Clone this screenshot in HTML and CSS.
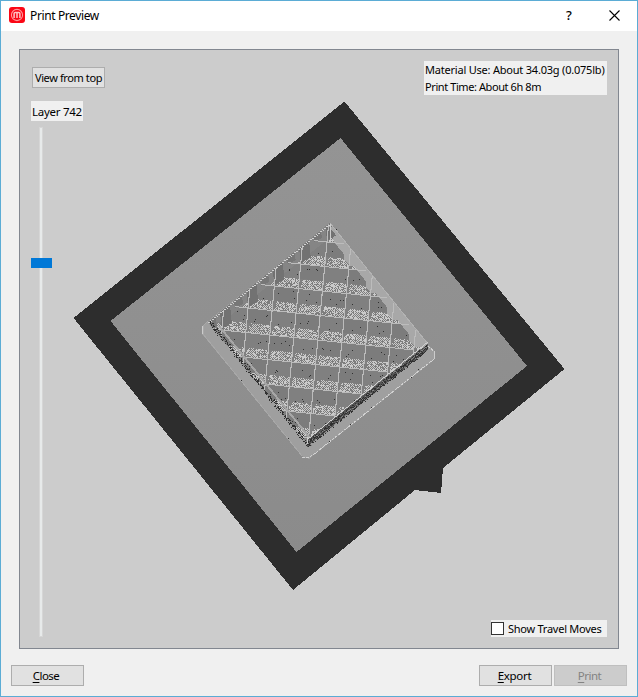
FILE: index.html
```html
<!DOCTYPE html>
<html lang="en">
<head>
<meta charset="utf-8">
<title>Print Preview</title>
<link rel="stylesheet" href="styles.css">
</head>
<body>
<div class="window">
  <header class="titlebar">
    <svg class="logo" width="16" height="16" viewBox="0 0 16 16"><rect width="16" height="16" rx="3" fill="#fb0715"/><circle cx="8" cy="8" r="5.6" fill="none" stroke="#ff9a9d" stroke-width="1.1"/><path d="M5.1 11V6.6Q5.1 5.5 6.2 5.5H9.8Q10.9 5.5 10.9 6.6V11M8 5.5V11" fill="none" stroke="#ffc4c5" stroke-width="1.5"/></svg>
    <h1 class="title">Print Preview</h1>
    <span class="help">?</span>
    <svg class="close-icon" width="11" height="11" viewBox="0 0 11 11"><path d="M.5.5l10 10M10.5.5l-10 10" stroke="#000" stroke-width="1.1"/></svg>
  </header>
  <main class="content">
    <section class="viewport">
      <svg class="scene" width="598" height="598" viewBox="20 50 598 598" shape-rendering="crispEdges">
        <defs>
          <linearGradient id="bed" x1="0" y1="0" x2="0" y2="1"><stop offset="0" stop-color="#949494"/><stop offset="1" stop-color="#8b8b8b"/></linearGradient>
          <clipPath id="pit"><path d="M330 223L428 344L307 443L208 322Z"/></clipPath>
        </defs>
        <path d="M344.500 101.500L564.500 369L443 468L441 493L415 490L293 590L73.500 318Z" fill="#2d2d2d"/>
        <path d="M340.500 138L527 366L296.500 552L110.500 321Z" fill="url(#bed)"/>
        <path d="M209 320L202 327V334L303 457L309 459L434 360L435 352L428 344L330 223Z" fill="#9f9f9f"/>
        <g id="cells" clip-path="url(#pit)"></g>
        <g id="edges"></g>
      </svg>
      <button class="button view-button">View from top</button>
      <div class="tag layer">Layer 742</div>
      <div class="slider"><div class="handle"></div></div>
      <div class="tag info"><div class="material">Material Use: About 34.03g (0.075lb)</div><div class="time">Print Time: About 6h 8m</div></div>
      <label class="tag travel"><span class="box"></span><span class="travel-text">Show Travel Moves</span></label>
    </section>
    <footer class="actions">
      <button class="button action"><span class="close-text"><u>C</u>lose</span></button>
      <button class="button action export"><span class="export-text"><u>E</u>xport</span></button>
      <button class="button action" disabled><span class="print-text"><u>P</u>rint</span></button>
    </footer>
  </main>
</div>
<script src="scene.js"></script>
</body>
</html>
```
FILE: styles.css
```css
* { box-sizing: border-box; }
body { margin: 0; color: #000; font: 11px/17px "Noto Sans", sans-serif; }
.window { width: 638px; height: 697px; border: 1px solid #5bacd5; background: #f0f0f0; display: flex; flex-direction: column; }
.titlebar { height: 30px; padding: 0 17px 0 8px; display: flex; align-items: center; background: #fff; }
.logo { margin-top: -2px; }
.title { flex: 1; margin: -1px 0 0 5px; font-size: 12px; font-weight: 400; letter-spacing: -.38px; }
.help { width: 7px; margin: -1px 36px 0 0; font-size: 13px; font-weight: 500; }
.close-icon { margin-top: -1px; }
.content { flex: 1; padding: 18px 10px 10px; display: flex; flex-direction: column; justify-content: space-between; }
.viewport { position: relative; width: 600px; height: 600px; margin-left: 8px; border: 1px solid #828790; background: #ccc; }
.scene { display: block; }
.button { font: inherit; font-size: 11.5px; line-height: 17px; height: 21px; padding: 0; border: 1px solid #adadad; background: #e1e1e1; color: #000; white-space: nowrap; letter-spacing: -.3px; }
.button:disabled { background: #ccc; border-color: #bfbfbf; color: #838383; }
.view-button { position: absolute; left: 12px; top: 17px; width: 73px; font-size: 11px; letter-spacing: -.4px; }
.tag { position: absolute; background: #f0f0f0; white-space: nowrap; }
.layer { left: 11px; top: 51px; width: 52px; height: 20px; padding: 2px 1px; font-size: 11.5px; letter-spacing: -.28px; }
.slider { position: absolute; left: 19px; top: 77px; width: 4px; height: 510px; background: #e7eaea; border: 1px solid #d6d6d6; }
.handle { position: absolute; left: -9px; top: 130px; width: 21px; height: 10px; background: #0078d7; }
.info { left: 404px; top: 11px; width: 183px; height: 34px; padding-left: 1px; }
.material { letter-spacing: -.21px; }
.time { letter-spacing: -.41px; }
.travel { left: 471px; top: 570px; width: 116px; height: 17px; display: flex; align-items: center; gap: 4px; letter-spacing: -.25px; }
.box { width: 13px; height: 13px; border: 1px solid #333; background: #fff; }
.actions { display: flex; gap: 2px; }
.action { width: 73px; }
.close-text { margin-right: 3px; letter-spacing: -.5px; }
.export-text { margin-right: 2px; }
.print-text { margin-right: 2px; letter-spacing: -.5px; }
.export { margin-left: auto; }
u { text-underline-offset: 2px; }
```
FILE: scene.js
```javascript
// Open infill lattice: wall faces, mesh floor, and the ridges between cells.
const NS = "http://www.w3.org/2000/svg";
const cells = document.getElementById("cells");
const edges = document.getElementById("edges");
let seed = 742;
const rnd = () => (seed = (seed * 16807) % 2147483647) / 2147483647;
const draw = (parent, d, attrs) => {
  const p = document.createElementNS(NS, "path");
  p.setAttribute("d", d);
  for (const k in attrs) p.setAttribute(k, attrs[k]);
  parent.appendChild(p);
};
const node = (i, j) => [327 + 24 * i - 2.3 * j, 242 + 2.5 * i + 24.5 * j];
const at = (i, j) => node(i, j).map(v => v.toFixed(1)).join(" ");
const poly = pts => "M" + pts.map(p => at(p[0], p[1])).join("L") + "Z";
const dot = (x, y) => `M${Math.round(x)} ${Math.round(y)}h1v1h-1z`;
const upper = x => x < 330 ? 223 + (330 - x) * .811 : 223 + (x - 330) * 1.235;
const lower = x => x < 307 ? 322 + (x - 208) * 1.222 : 443 - (x - 307) * .818;

draw(cells, "M330 223L428 344L307 443L208 322Z", { fill: "#808080" });
let light = "", dark = "", mid = "";
for (let j = -1; j < 9; j++) for (let i = -7; i < 7; i++) {
  draw(cells, poly([[i, j], [i + 1, j], [i + 1, j + .6], [i, j + .6]]), { fill: (i + j) % 2 ? "#808080" : "#7c7c7c" });
  const [x, y] = node(i, j);
  for (let a = 2; a < 24; a++) for (let b = 15; b < 24; b++) {
    if (a < (24 - b) * .35) continue;
    const px = x + a - b * .09, py = y + b + a * .1;
    if (py < upper(px) + 9 || py > lower(px)) continue;
    const sx = Math.round(px), sy = Math.round(py);
    if ((sx + sy) % 2 ? rnd() < .8 : rnd() < .22) light += dot(px, py);
    else mid += dot(px, py);
  }
  for (let n = 0; n < 4; n++) {
    const px = x + 3 + rnd() * 18, py = y + 5 + rnd() * 10;
    if (py > upper(px) + 12 && rnd() < .75) dark += dot(px, py);
  }
}
draw(cells, mid, { fill: "#7d7d7d" });
draw(cells, light, { fill: "#cacaca" });
draw(cells, dark, { fill: "#303030" });
draw(cells, "M330 223L428 344L412 338L334 242Z", { fill: "#a8a8a8" });
draw(cells, "M330 223L208 322L222 322L327 240Z", { fill: "#858585" });
// Wall ends where the rows and columns meet the outer shell.
for (let k = 0; k < 5; k++) {
  const [x, y] = node(-k, k);
  draw(cells, `M${x - 2} ${y - 20}L${x + 8} ${y - 27}L${x + 10} ${y - 7}L${x} ${y - 1}Z`, { fill: "#727272" });
  draw(cells, `M${x - 15} ${y - 11}L${x - 7} ${y - 16}L${x - 5} ${y - 4}L${x - 13} ${y}Z`, { fill: "#777" });
  const [r, s] = node(k, k);
  draw(cells, `M${r + 17} ${s + 3}L${r + 17} ${s + 18}L${r + 23} ${s + 24}L${r + 36} ${s + 24}L${r + 10} ${s - 12}L${r} ${s - 18}Z`, { fill: "#a8a8a8" });
}
for (let k = -6; k <= 8; k++) {
  const start = k < 4 ? -k - .55 : -5 + (k - 4) * .7;
  const end = k < 4 ? k + .7 : 8 - k;
  draw(cells, `M${at(start, k)}L${at(end, k)}`, { stroke: "#bcbcbc", "stroke-width": 1, fill: "none" });
  const top = Math.abs(k) - .8;
  draw(cells, `M${at(k, top)}L${at(k, 9)}`, { stroke: "#bcbcbc", "stroke-width": 1.1, fill: "none" });
}

// Printed shell and raft outline.
draw(edges, "M428 344L307 440V447L428 350Z", { fill: "#555" });
let black = "", white = "", shellLight = "";
for (let x = 210; x < 309; x++) {
  const y = 322 + (x - 210) * 1.25;
  for (let n = 0; n < 3; n++) black += dot(x + rnd() * 2 - 1, y + rnd() * 5 - 2);
}
for (let x = 308; x < 428; x++) {
  const y = 443 - (x - 307) * .81;
  for (let n = 0; n < 4; n++) black += dot(x, y + rnd() * 7 - 2);
  shellLight += dot(x, y + rnd() * 7 - 2);
  white += dot(x, y - 4);
}
for (let x = 208; x < 330; x++) white += dot(x, upper(x) + (x % 2));
draw(edges, black, { fill: "#303030" });
draw(edges, shellLight, { fill: "#858585" });
draw(edges, white, { fill: "#d0d0d0" });
draw(edges, "M330 223L428 344", { stroke: "#b3b3b3", fill: "none" });
draw(edges, "M219 326L309 437", { stroke: "#a6a6a6", "stroke-width": 2, fill: "none" });
draw(edges, "M208 321L203 326V334L302 456", { stroke: "#a8a8a8", fill: "none" });
draw(edges, "M302 457L308 458L313 455L434 359L435 352L428 346", { stroke: "#d1d1d1", "stroke-dasharray": "3 1", fill: "none" });
draw(edges, "M307 437V444M330 224V241M202 326V334M434 351V359", { stroke: "#ccc", fill: "none" });
draw(edges, [[336,229],[262,387],[288,438],[241,380],[329,441],[350,424],[371,407],[411,377],[418,369]].map(p => dot(p[0], p[1])).join(""), { fill: "#303030" });
```
